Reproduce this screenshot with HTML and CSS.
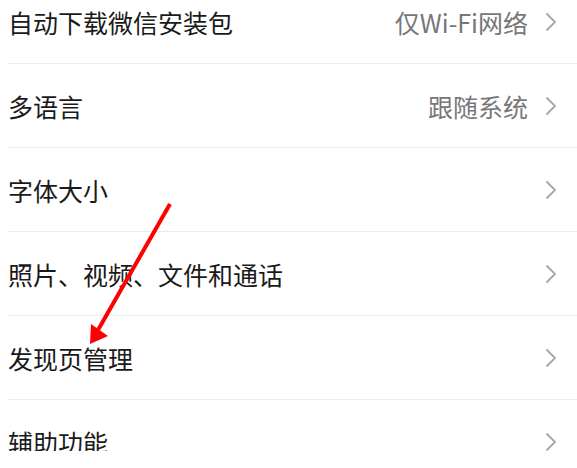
FILE: index.html
```html
<!DOCTYPE html>
<html lang="zh-CN">
<head>
  <meta charset="UTF-8">
  <meta name="viewport" content="width=device-width, initial-scale=1.0">
  <title>设置</title>
  <link rel="stylesheet" href="styles.css">
</head>
<body>
  <div class="screen">
    <ul class="settings">
      <li class="row">
        <span class="label">自动下载微信安装包</span>
        <span class="value">仅Wi-Fi网络</span>
        <svg class="chevron" viewBox="0 0 12 20"><polyline points="1.5,1.5 10,10 1.5,18.5"/></svg>
      </li>
      <li class="row">
        <span class="label">多语言</span>
        <span class="value">跟随系统</span>
        <svg class="chevron" viewBox="0 0 12 20"><polyline points="1.5,1.5 10,10 1.5,18.5"/></svg>
      </li>
      <li class="row">
        <span class="label">字体大小</span>
        <svg class="chevron" viewBox="0 0 12 20"><polyline points="1.5,1.5 10,10 1.5,18.5"/></svg>
      </li>
      <li class="row">
        <span class="label">照片、视频、文件和通话</span>
        <svg class="chevron" viewBox="0 0 12 20"><polyline points="1.5,1.5 10,10 1.5,18.5"/></svg>
      </li>
      <li class="row">
        <span class="label">发现页管理</span>
        <svg class="chevron" viewBox="0 0 12 20"><polyline points="1.5,1.5 10,10 1.5,18.5"/></svg>
      </li>
      <li class="row">
        <span class="label">辅助功能</span>
        <svg class="chevron" viewBox="0 0 12 20"><polyline points="1.5,1.5 10,10 1.5,18.5"/></svg>
      </li>
    </ul>

    <!-- annotation arrow drawn over the list -->
    <svg class="arrow" viewBox="0 0 577 450">
      <line x1="170" y1="204" x2="98" y2="330" />
      <polygon points="90,344 91,324 108,336" />
    </svg>
  </div>
</body>
</html>
```

FILE: styles.css
```css
html, body {
  margin: 0;
  padding: 0;
  background-color: #ffffff;
}

body {
  font-family: "Noto Sans CJK SC", "Noto Sans", sans-serif;
  color: #1a1a1a;
}

.screen {
  position: relative;
  height: 451px;
  overflow: hidden;
}

.settings {
  list-style: none;
  margin: -20px 0 0 0;
  padding: 0 0 0 7px;
}

.row {
  display: flex;
  align-items: center;
  height: 83px;
  border-bottom: 1px solid #ececec;
  padding-right: 20px;
  font-size: 25px;
}

.label {
  flex: 1;
  padding-left: 1px;
  white-space: nowrap;
}

.value {
  color: #777777;
  margin-right: 17px;
  white-space: nowrap;
}

.chevron {
  width: 12px;
  height: 20px;
  fill: none;
  stroke: #a6a6a6;
  stroke-width: 1.8;
}

.arrow {
  position: absolute;
  left: 0;
  top: 0;
  width: 577px;
  height: 450px;
}

.arrow line {
  stroke: #ff0000;
  stroke-width: 4;
}

.arrow polygon {
  fill: #ff0000;
}
```
